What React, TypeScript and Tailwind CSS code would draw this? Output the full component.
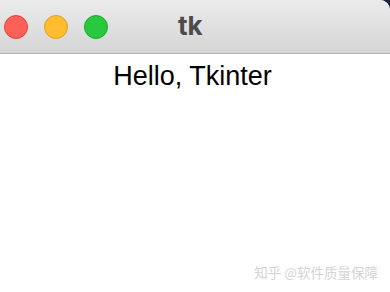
export default function App() {
  return (
    <div className="w-[390px] h-[292px] bg-[#1c2340] overflow-hidden" style={{ fontFamily: "Inter, 'Liberation Sans', sans-serif" }}>
      <div className="w-full h-full bg-white rounded-tr-[10px] flex flex-col">
        <div className="h-[54px] flex items-center relative bg-gradient-to-b from-[#ebebeb] to-[#d5d5d5] border-b border-[#b4b4b4] rounded-tr-[10px]">
          <div className="flex items-center gap-[16px] pl-[4px]">
            <span className="w-[24px] h-[24px] rounded-full bg-[#fe5f57] border border-[#e0443e]" />
            <span className="w-[24px] h-[24px] rounded-full bg-[#febc2e] border border-[#dea123]" />
            <span className="w-[24px] h-[24px] rounded-full bg-[#28c840] border border-[#1aab29]" />
          </div>
          <span className="absolute left-[178px] top-[11px] text-[26px] font-bold text-[#4c4c4c] leading-[30px]">tk</span>
        </div>
        <div className="flex justify-center pt-[7px] pr-[5px]">
          <span className="text-[27px] text-black leading-[30px]" style={{ fontFamily: "'Liberation Sans', sans-serif" }}>Hello, Tkinter</span>
        </div>
        <div className="flex-1" />
        <div className="flex justify-end pr-[12px] pb-[12px]">
          <span className="text-[13.5px] text-[#d4d4d4] leading-[16px]" style={{ fontFamily: "'Noto Sans CJK SC', sans-serif" }}>知乎 @软件质量保障</span>
        </div>
      </div>
    </div>
  );
}
